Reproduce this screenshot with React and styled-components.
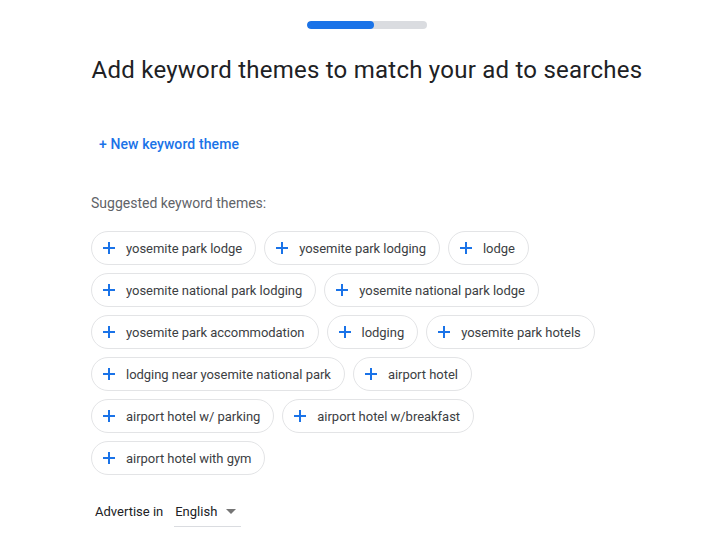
import React from "react";
import styled, { createGlobalStyle } from "styled-components";

const GlobalStyle = createGlobalStyle`
  body {
    margin: 0;
    background: #ffffff;
    font-family: Roboto, "Liberation Sans", Arial, sans-serif;
  }
`;

const themes = [
  "yosemite park lodge",
  "yosemite park lodging",
  "lodge",
  "yosemite national park lodging",
  "yosemite national park lodge",
  "yosemite park accommodation",
  "lodging",
  "yosemite park hotels",
  "lodging near yosemite national park",
  "airport hotel",
  "airport hotel w/ parking",
  "airport hotel w/breakfast",
  "airport hotel with gym",
];

const PlusIcon = () => (
  <svg width="12" height="12" viewBox="0 0 12 12">
    <path d="M6 0v12M0 6h12" stroke="#1a73e8" strokeWidth="2" fill="none" />
  </svg>
);

const App = () => {
  return (
    <>
      <GlobalStyle />
      <Page>
        <Column>
          <ProgressTrack>
            <ProgressFill $value={56} />
          </ProgressTrack>
          <Title>Add keyword themes to match your ad to searches</Title>
          <NewThemeButton>+ New keyword theme</NewThemeButton>
          <SectionLabel>Suggested keyword themes:</SectionLabel>
          <ChipList>
            {themes.map((t) => (
              <Chip key={t}>
                <PlusIcon />
                <ChipText>{t}</ChipText>
              </Chip>
            ))}
          </ChipList>
          <LanguageRow>
            <LanguageLabel>Advertise in</LanguageLabel>
            <LanguageSelect>
              <span>English</span>
              <Caret />
            </LanguageSelect>
          </LanguageRow>
        </Column>
      </Page>
    </>
  );
};

export default App;

const Page = styled.div`
  width: 725px;
  height: 543px;
  overflow: hidden;
`;

const Column = styled.div`
  width: 552px;
  margin-left: 91px;
  padding-top: 21px;
  display: flex;
  flex-direction: column;
`;

const ProgressTrack = styled.div`
  align-self: center;
  width: 120px;
  height: 8px;
  border-radius: 4px;
  background: #dadce0;
  overflow: hidden;
`;

const ProgressFill = styled.div`
  width: ${(p) => p.$value}%;
  height: 100%;
  border-radius: 4px;
  background: #1a73e8;
`;

const Title = styled.h1`
  margin: 21px 0 0;
  text-align: center;
  font-size: 24px;
  font-weight: 400;
  line-height: 40px;
  letter-spacing: 0.24px;
  color: #202124;
  white-space: nowrap;
`;

const NewThemeButton = styled.button`
  align-self: flex-start;
  margin: 36px 0 0 0;
  padding: 0 8px;
  height: 36px;
  border: none;
  background: none;
  font-family: Roboto, "Liberation Sans", Arial, sans-serif;
  font-size: 14px;
  font-weight: 500;
  color: #1a73e8;
  letter-spacing: 0.1px;
  cursor: pointer;
`;

const SectionLabel = styled.div`
  margin-top: 31px;
  font-size: 14px;
  line-height: 20px;
  color: #5f6368;
`;

const ChipList = styled.div`
  margin-top: 18px;
  display: flex;
  flex-wrap: wrap;
  gap: 8px;
`;

const Chip = styled.div`
  height: 34px;
  box-sizing: border-box;
  display: flex;
  align-items: center;
  gap: 11px;
  padding: 0 13px 0 11px;
  border: 1px solid #e3e4e6;
  border-radius: 17px;
  background: #fff;
`;

const ChipText = styled.span`
  font-size: 13px;
  letter-spacing: -0.03px;
  color: #3c4043;
`;

const LanguageRow = styled.div`
  margin-top: 21px;
  display: flex;
  align-items: center;
  padding-left: 4px;
  gap: 11px;
`;

const LanguageLabel = styled.span`
  font-size: 13px;
  color: #202124;
`;

const LanguageSelect = styled.div`
  width: 67px;
  height: 31px;
  box-sizing: border-box;
  display: flex;
  align-items: center;
  gap: 9px;
  padding-left: 1px;
  border-bottom: 1px solid #dadce0;
  font-size: 13px;
  color: #202124;
`;

const Caret = styled.span`
  width: 0;
  height: 0;
  border-left: 5px solid transparent;
  border-right: 5px solid transparent;
  border-top: 5px solid #757575;
`;
